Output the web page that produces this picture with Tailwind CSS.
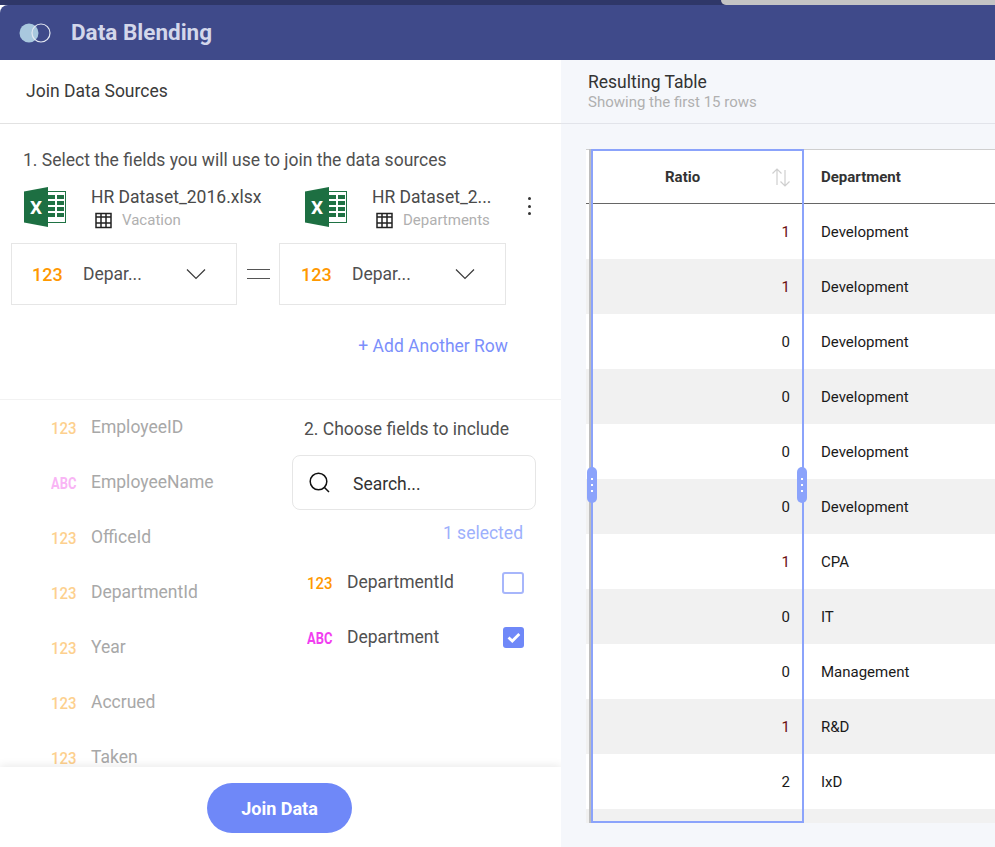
<!DOCTYPE html>
<html lang="en">
<head>
  <meta charset="UTF-8">
  <title>Data Blending</title>
  <script src="https://cdn.jsdelivr.net/npm/@tailwindcss/browser@4"></script>
</head>
<body class="w-[995px] h-[847px] overflow-hidden bg-white font-['Roboto',sans-serif]">

  <!-- strip behind the dialog -->
  <div class="h-[5px] flex bg-[#2f3768]">
    <div class="w-[721px]"></div>
    <div class="flex-1 bg-[#c4c4c4] rounded-bl-[5px]"></div>
  </div>

  <!-- title bar -->
  <header class="h-[55px] bg-[#3f4a8a] rounded-tl-[8px] flex items-center pl-[19px]">
    <svg width="32" height="20" viewBox="0 0 32 20">
      <circle cx="10" cy="10" r="9.500" fill="#a9c8de"/>
      <circle cx="22" cy="10" r="9" fill="none" stroke="#e4e8f2" stroke-width="1.200"/>
    </svg>
    <span class="ml-[20px] text-[22.500px] font-bold text-[#d3d7ea]">Data Blending</span>
  </header>

  <div class="flex h-[787px]">
    <!-- left panel -->
    <section class="w-[561px] flex flex-col bg-white">
      <div class="h-[64px] shrink-0 flex items-center pl-[26px] border-b border-[#e2e2e2] text-[17.500px] text-[#3a3a3a]">Join Data Sources</div>

      <div class="h-[276px] shrink-0 border-b border-[#f2f2f2] pt-[25px] relative">
        <p class="pl-[23px] text-[17.500px] leading-[22px] text-[#505050]">1. Select the fields you will use to join the data sources</p>

        <div class="flex mt-[15px] h-[46px]">
          <div class="w-[305px] flex pl-[24px]">
            <svg width="42" height="40" viewBox="0 0 42 40" class="mt-[1px]">
              <rect x="22" y="4.500" width="19.500" height="31" fill="#ffffff" stroke="#1f7244" stroke-width="1"/>
              <path d="M24 8h7v4h-7zM33 8h7v4h-7zM24 14h7v4h-7zM33 14h7v4h-7zM24 20h7v4h-7zM33 20h7v4h-7zM24 26h7v4h-7zM33 26h7v4h-7z" fill="#1f7244"/>
              <polygon points="0,4.500 24,0 24,40 0,35.500" fill="#1d6f42"/>
              <text x="12" y="27" text-anchor="middle" font-family="Roboto" font-weight="700" font-size="19" fill="#fff">X</text>
            </svg>
            <div class="ml-[25px]">
              <div class="text-[17.500px] leading-[22px] text-[#4a4a4a]">HR Dataset_2016.xlsx</div>
              <div class="flex items-center pl-[4px]">
                <svg width="17" height="17" viewBox="0 0 17 17" fill="none" stroke="#222" stroke-width="1.500"><rect x="1" y="1.500" width="15" height="14"/><path d="M1 5h15M1 11h15M6 1.500v14M11 1.500v14"/></svg>
                <span class="ml-[10px] text-[15px] leading-[24px] text-[#b0b0b0]">Vacation</span>
              </div>
            </div>
          </div>
          <div class="flex">
            <svg width="42" height="40" viewBox="0 0 42 40" class="mt-[1px]">
              <rect x="22" y="4.500" width="19.500" height="31" fill="#ffffff" stroke="#1f7244" stroke-width="1"/>
              <path d="M24 8h7v4h-7zM33 8h7v4h-7zM24 14h7v4h-7zM33 14h7v4h-7zM24 20h7v4h-7zM33 20h7v4h-7zM24 26h7v4h-7zM33 26h7v4h-7z" fill="#1f7244"/>
              <polygon points="0,4.500 24,0 24,40 0,35.500" fill="#1d6f42"/>
              <text x="12" y="27" text-anchor="middle" font-family="Roboto" font-weight="700" font-size="19" fill="#fff">X</text>
            </svg>
            <div class="ml-[25px] w-[118px]">
              <div class="text-[17.500px] leading-[22px] text-[#4a4a4a] whitespace-nowrap">HR Dataset_2...</div>
              <div class="flex items-center pl-[4px]">
                <svg width="17" height="17" viewBox="0 0 17 17" fill="none" stroke="#222" stroke-width="1.500"><rect x="1" y="1.500" width="15" height="14"/><path d="M1 5h15M1 11h15M6 1.500v14M11 1.500v14"/></svg>
                <span class="ml-[10px] text-[15px] leading-[24px] text-[#b0b0b0]">Departments</span>
              </div>
            </div>
            <div class="ml-[38px] mt-[11px] flex flex-col gap-[4.500px]">
              <span class="w-[3px] h-[3px] rounded-full bg-[#333]"></span>
              <span class="w-[3px] h-[3px] rounded-full bg-[#333]"></span>
              <span class="w-[3px] h-[3px] rounded-full bg-[#333]"></span>
            </div>
          </div>
        </div>

        <div class="flex items-center mt-[11px] pl-[11px]">
          <div class="w-[226px] h-[62px] border border-[#e6e6e6] flex items-center pl-[20px]">
            <span class="w-[30px] text-[18px] font-medium text-[#ff9800]">123</span>
            <span class="ml-[21px] w-[103px] text-[17.500px] text-[#505050]">Depar...</span>
            <svg width="20" height="12" viewBox="0 0 20 12" fill="none" stroke="#3a3a3a" stroke-width="1.200"><path d="M1 1.500l9 9 9-9"/></svg>
          </div>
          <div class="w-[42px] flex flex-col items-center gap-[8px]">
            <span class="w-[23px] h-[1px] bg-[#555]"></span>
            <span class="w-[23px] h-[1px] bg-[#555]"></span>
          </div>
          <div class="w-[227px] h-[62px] border border-[#e6e6e6] flex items-center pl-[21px]">
            <span class="w-[30px] text-[18px] font-medium text-[#ff9800]">123</span>
            <span class="ml-[21px] w-[103px] text-[17.500px] text-[#505050]">Depar...</span>
            <svg width="20" height="12" viewBox="0 0 20 12" fill="none" stroke="#3a3a3a" stroke-width="1.200"><path d="M1 1.500l9 9 9-9"/></svg>
          </div>
        </div>

        <div class="mt-[29px] pr-[53px] text-right text-[17.500px] leading-[24px] text-[#7b8ffb]">+ Add Another Row</div>
      </div>

      <div class="h-[367px] shrink-0 overflow-hidden flex">
        <!-- available fields -->
        <ul class="w-[292px] shrink-0">
          <li class="h-[55px] flex items-center pl-[51px]"><span class="w-[40px] origin-left scale-x-[0.88] text-[17px] font-medium text-[#fdd08e] mt-[2px]">123</span><span class="text-[17.500px] text-[#a8a8a8]">EmployeeID</span></li>
          <li class="h-[55px] flex items-center pl-[51px]"><span class="w-[40px] origin-left scale-x-[0.76] text-[17px] font-bold text-[#f9b5f5] mt-[2px]">ABC</span><span class="text-[17.500px] text-[#a8a8a8]">EmployeeName</span></li>
          <li class="h-[55px] flex items-center pl-[51px]"><span class="w-[40px] origin-left scale-x-[0.88] text-[17px] font-medium text-[#fdd08e] mt-[2px]">123</span><span class="text-[17.500px] text-[#a8a8a8]">OfficeId</span></li>
          <li class="h-[55px] flex items-center pl-[51px]"><span class="w-[40px] origin-left scale-x-[0.88] text-[17px] font-medium text-[#fdd08e] mt-[2px]">123</span><span class="text-[17.500px] text-[#a8a8a8]">DepartmentId</span></li>
          <li class="h-[55px] flex items-center pl-[51px]"><span class="w-[40px] origin-left scale-x-[0.88] text-[17px] font-medium text-[#fdd08e] mt-[2px]">123</span><span class="text-[17.500px] text-[#a8a8a8]">Year</span></li>
          <li class="h-[55px] flex items-center pl-[51px]"><span class="w-[40px] origin-left scale-x-[0.88] text-[17px] font-medium text-[#fdd08e] mt-[2px]">123</span><span class="text-[17.500px] text-[#a8a8a8]">Accrued</span></li>
          <li class="h-[55px] flex items-center pl-[51px]"><span class="w-[40px] origin-left scale-x-[0.88] text-[17px] font-medium text-[#fdd08e] mt-[2px]">123</span><span class="text-[17.500px] text-[#a8a8a8]">Taken</span></li>
        </ul>

        <!-- chosen fields -->
        <div class="w-[244px] shrink-0">
          <div class="h-[55px] flex items-center pl-[12px] pt-[4px] text-[17.500px] text-[#505050]">2. Choose fields to include</div>
          <div class="h-[55px] border border-[#e6e6e6] rounded-[8px] flex items-center pl-[16px]">
            <svg width="21" height="21" viewBox="0 0 21 21" fill="none" stroke="#111" stroke-width="1.500"><circle cx="9.500" cy="9.500" r="8.300"/><path d="M15.500 15.500l4.500 4.500"/></svg>
            <span class="ml-[23px] pt-[4px] text-[17.500px] text-[#333]">Search...</span>
          </div>
          <div class="h-[45px] flex items-center justify-end pr-[13px] pt-[2px] text-[17.500px] text-[#9db0fc]">1 selected</div>
          <div class="h-[55px] flex items-center pl-[15px]">
            <span class="w-[40px] origin-left scale-x-[0.88] text-[17px] font-medium text-[#ff9800] mt-[2px]">123</span>
            <span class="flex-1 text-[17.500px] text-[#505050]">DepartmentId</span>
            <span class="w-[22px] h-[22px] mr-[12px] border-2 border-[#a7b6fb] rounded-[3px]"></span>
          </div>
          <div class="h-[55px] flex items-center pl-[15px]">
            <span class="w-[40px] origin-left scale-x-[0.76] text-[17px] font-bold text-[#f13ef0] mt-[2px]">ABC</span>
            <span class="flex-1 text-[17.500px] text-[#505050]">Department</span>
            <span class="w-[21px] h-[21px] mr-[12px] rounded-[3px] bg-[#6f88f8] flex items-center justify-center">
              <svg width="14" height="11" viewBox="0 0 14 11" fill="none" stroke="#fff" stroke-width="2.800"><path d="M1.500 5.500l3.800 3.500 7-7"/></svg>
            </span>
          </div>
        </div>
      </div>

      <footer class="h-[80px] shrink-0 bg-white shadow-[0_-2px_8px_rgba(0,0,0,0.08)] relative flex justify-center pt-[16px] pr-[2px]">
        <button class="w-[145px] h-[50px] rounded-full bg-[#6f88f8] text-white text-[18px] font-bold">Join Data</button>
      </footer>
    </section>

    <!-- right panel -->
    <section class="flex-1 bg-[#f5f7fb] relative overflow-hidden">
      <div class="h-[64px] border-b border-[#e2e4ea] pl-[27px] pt-[12px]">
        <div class="text-[17.500px] leading-[20px] text-[#333]">Resulting Table</div>
        <div class="text-[15px] leading-[20px] text-[#b0b0b0]">Showing the first 15 rows</div>
      </div>

      <div class="ml-[25px] mt-[25px] h-[674px] overflow-hidden bg-white border-t border-[#cfcfcf]">
        <div class="flex h-[54px] items-center border-b border-[#666] text-[15px] font-bold text-[#333]">
          <div class="w-[217px] flex items-center pl-[79px]">
            <span class="w-[106px] pt-[2px]">Ratio</span>
            <svg width="20" height="20" viewBox="0 0 20 20" fill="none" stroke="#cfcfcf" stroke-width="1.200"><path d="M6 18V2M1.500 6.500L6 2l4.500 4.500M14 3v16M9.500 14.500L14 19l4.500-4.500"/></svg>
          </div>
          <div class="pl-[18px] pt-[2px]">Department</div>
        </div>
        <div class="flex h-[55px] pt-[2px] items-center text-[15px] text-[#1a1a1a] bg-white"><div class="w-[204px] text-right text-[#6b0f0f]">1</div><div class="pl-[31px]">Development</div></div>
        <div class="flex h-[55px] pt-[2px] items-center text-[15px] text-[#1a1a1a] bg-[#f1f1f1]"><div class="w-[204px] text-right text-[#6b0f0f]">1</div><div class="pl-[31px]">Development</div></div>
        <div class="flex h-[55px] pt-[2px] items-center text-[15px] text-[#1a1a1a] bg-white"><div class="w-[204px] text-right">0</div><div class="pl-[31px]">Development</div></div>
        <div class="flex h-[55px] pt-[2px] items-center text-[15px] text-[#1a1a1a] bg-[#f1f1f1]"><div class="w-[204px] text-right">0</div><div class="pl-[31px]">Development</div></div>
        <div class="flex h-[55px] pt-[2px] items-center text-[15px] text-[#1a1a1a] bg-white"><div class="w-[204px] text-right">0</div><div class="pl-[31px]">Development</div></div>
        <div class="flex h-[55px] pt-[2px] items-center text-[15px] text-[#1a1a1a] bg-[#f1f1f1]"><div class="w-[204px] text-right">0</div><div class="pl-[31px]">Development</div></div>
        <div class="flex h-[55px] pt-[2px] items-center text-[15px] text-[#1a1a1a] bg-white"><div class="w-[204px] text-right text-[#6b0f0f]">1</div><div class="pl-[31px]">CPA</div></div>
        <div class="flex h-[55px] pt-[2px] items-center text-[15px] text-[#1a1a1a] bg-[#f1f1f1]"><div class="w-[204px] text-right">0</div><div class="pl-[31px]">IT</div></div>
        <div class="flex h-[55px] pt-[2px] items-center text-[15px] text-[#1a1a1a] bg-white"><div class="w-[204px] text-right">0</div><div class="pl-[31px]">Management</div></div>
        <div class="flex h-[55px] pt-[2px] items-center text-[15px] text-[#1a1a1a] bg-[#f1f1f1]"><div class="w-[204px] text-right text-[#6b0f0f]">1</div><div class="pl-[31px]">R&amp;D</div></div>
        <div class="flex h-[55px] pt-[2px] items-center text-[15px] text-[#1a1a1a] bg-white"><div class="w-[204px] text-right">2</div><div class="pl-[31px]">IxD</div></div>
        <div class="flex h-[55px] items-center bg-[#f1f1f1]"></div>
      </div>

      <!-- column resize frame, sits over the table -->
      <div class="absolute left-[28px] top-[89px] w-[2px] h-[674px] bg-[#bdbdbd]"></div>
      <div class="absolute left-[30px] top-[89px] w-[213px] h-[674px] border-2 border-[#8ba3fb]"></div>
      <div class="absolute left-[26px] top-[407px] w-[10px] h-[36px] rounded-full bg-[#8ba3fb] flex flex-col items-center justify-center gap-[4px]">
        <span class="w-[2px] h-[2px] bg-white"></span><span class="w-[2px] h-[2px] bg-white"></span><span class="w-[2px] h-[2px] bg-white"></span>
      </div>
      <div class="absolute left-[236px] top-[407px] w-[10px] h-[36px] rounded-full bg-[#8ba3fb] flex flex-col items-center justify-center gap-[4px]">
        <span class="w-[2px] h-[2px] bg-white"></span><span class="w-[2px] h-[2px] bg-white"></span><span class="w-[2px] h-[2px] bg-white"></span>
      </div>
    </section>
  </div>
</body>
</html>
